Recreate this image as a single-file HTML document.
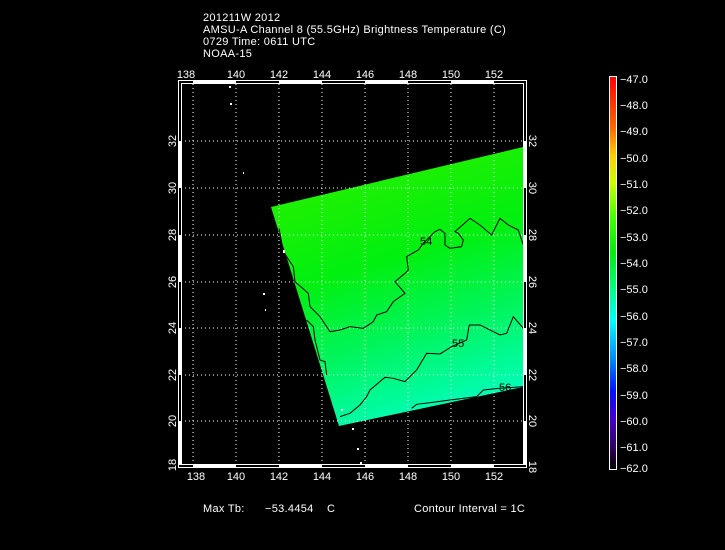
<!DOCTYPE html>
<html><head><style>
html,body{margin:0;padding:0;background:#000;width:725px;height:550px;overflow:hidden}
svg{display:block}
text{font-family:"Liberation Sans",sans-serif;fill:#fff;font-size:11px}
</style></head><body>
<svg width="725" height="550" viewBox="0 0 725 550">
<defs>
<linearGradient id="g" gradientUnits="userSpaceOnUse" x1="390" y1="160" x2="470" y2="420">
<stop offset="0" stop-color="#22f000"/>
<stop offset="0.35" stop-color="#00f010"/>
<stop offset="0.65" stop-color="#00f560"/>
<stop offset="1" stop-color="#00ffc8"/>
</linearGradient>
<linearGradient id="cb" x1="0" y1="0" x2="0" y2="1">
<stop offset="0" stop-color="#ff0000"/>
<stop offset="0.13" stop-color="#ff6600"/>
<stop offset="0.2" stop-color="#ffcc00"/>
<stop offset="0.27" stop-color="#ccff00"/>
<stop offset="0.36" stop-color="#44ff00"/>
<stop offset="0.45" stop-color="#00ee10"/>
<stop offset="0.55" stop-color="#00ff90"/>
<stop offset="0.62" stop-color="#00ffff"/>
<stop offset="0.72" stop-color="#0088ff"/>
<stop offset="0.8" stop-color="#0011ff"/>
<stop offset="0.87" stop-color="#4400cc"/>
<stop offset="0.94" stop-color="#330066"/>
<stop offset="1" stop-color="#000000"/>
</linearGradient>
</defs>
<g style="letter-spacing:0.3px">
<text x="203" y="21">201211W 2012</text>
<text x="203" y="33">AMSU-A Channel 8 (55.5GHz) Brightness Temperature (C)</text>
<text x="203" y="45">0729 Time: 0611 UTC</text>
<text x="203" y="57">NOAA-15</text>
</g>

<polygon points="271,207 523,147 523,387 339,426" fill="url(#g)"/>

<g stroke="#fff" stroke-width="1" stroke-dasharray="1,3" fill="none">
<line x1="193" y1="84" x2="193" y2="465"/><line x1="236" y1="84" x2="236" y2="465"/>
<line x1="279" y1="84" x2="279" y2="465"/><line x1="322" y1="84" x2="322" y2="465"/>
<line x1="365" y1="84" x2="365" y2="465"/><line x1="408" y1="84" x2="408" y2="465"/>
<line x1="451" y1="84" x2="451" y2="465"/><line x1="494" y1="84" x2="494" y2="465"/>
<line x1="181" y1="141" x2="524" y2="141"/><line x1="181" y1="188" x2="524" y2="188"/>
<line x1="181" y1="235" x2="524" y2="235"/><line x1="181" y1="282" x2="524" y2="282"/>
<line x1="181" y1="328" x2="524" y2="328"/><line x1="181" y1="375" x2="524" y2="375"/>
<line x1="181" y1="421" x2="524" y2="421"/>
</g>

<g transform="translate(260,140) scale(0.3333)" stroke="#000" stroke-width="3" fill="none">
<polyline points="57,265 70,335 100,380 105,425 145,460 150,500 180,530 210,575 240,570 270,560 310,565 340,545 350,525 380,515 400,485 435,460 405,425 435,400 445,390 440,350 475,330 490,310 525,275 540,268 555,280 555,315 570,325 605,320 610,300 595,280 585,275 630,235 660,255 695,285 720,235 745,255 775,270 790,315"/>
<polyline points="140,540 160,560 165,600 180,660 195,665 200,705"/>
<polyline points="240,830 270,820 300,795 320,770 330,750 375,712 400,715 435,725 470,690 500,640 540,642 575,620 620,600 628,555 660,555 690,570 720,585 740,580 760,530 790,565"/>
<polyline points="455,805 470,793 520,787 570,780 650,770 670,750 720,745 790,740"/>
</g>
<text x="420" y="245" font-size="10" style="fill:#000">54</text>
<text x="452" y="347" font-size="10" style="fill:#000">55</text>
<text x="499" y="391" font-size="10" style="fill:#000">56</text>

<g fill="#fff">
<rect x="229" y="86" width="2" height="2"/><rect x="230" y="103" width="2" height="2"/>
<rect x="243" y="172" width="1" height="2"/><rect x="283" y="250" width="2" height="3"/>
<rect x="263" y="293" width="2" height="2"/><rect x="265" y="309" width="1" height="2"/>
<rect x="341" y="409" width="2" height="2"/><rect x="352" y="428" width="2" height="2"/>
<rect x="357" y="448" width="2" height="2"/><rect x="360" y="462" width="2" height="2"/>
</g>

<rect x="178.5" y="80.5" width="348" height="387" fill="none" stroke="#fff" stroke-width="1"/>
<rect x="181.5" y="83.5" width="342" height="381" fill="none" stroke="#fff" stroke-width="1"/>
<g fill="#fff">
<rect x="193" y="81" width="43" height="2"/><rect x="279" y="81" width="43" height="2"/>
<rect x="365" y="81" width="43" height="2"/><rect x="451" y="81" width="43" height="2"/>
<rect x="193" y="465" width="43" height="2"/><rect x="279" y="465" width="43" height="2"/>
<rect x="365" y="465" width="43" height="2"/><rect x="451" y="465" width="43" height="2"/>
<rect x="179" y="141" width="2" height="47"/><rect x="179" y="235" width="2" height="47"/>
<rect x="179" y="328" width="2" height="47"/><rect x="179" y="421" width="2" height="44"/>
<rect x="524" y="141" width="2" height="47"/><rect x="524" y="235" width="2" height="47"/>
<rect x="524" y="328" width="2" height="47"/><rect x="524" y="421" width="2" height="44"/>
</g>

<g text-anchor="middle">
<text x="186" y="78">138</text><text x="236" y="78">140</text><text x="279" y="78">142</text>
<text x="322" y="78">144</text><text x="365" y="78">146</text><text x="408" y="78">148</text>
<text x="451" y="78">150</text><text x="494" y="78">152</text>
<text x="196" y="480">138</text><text x="236" y="480">140</text><text x="279" y="480">142</text>
<text x="322" y="480">144</text><text x="365" y="480">146</text><text x="408" y="480">148</text>
<text x="451" y="480">150</text><text x="494" y="480">152</text>
</g>
<g text-anchor="middle">
<text transform="translate(176,141) rotate(-90)">32</text>
<text transform="translate(176,188) rotate(-90)">30</text>
<text transform="translate(176,235) rotate(-90)">28</text>
<text transform="translate(176,282) rotate(-90)">26</text>
<text transform="translate(176,328) rotate(-90)">24</text>
<text transform="translate(176,375) rotate(-90)">22</text>
<text transform="translate(176,421) rotate(-90)">20</text>
<text transform="translate(176,465) rotate(-90)">18</text>
<text transform="translate(529,141) rotate(90)">32</text>
<text transform="translate(529,188) rotate(90)">30</text>
<text transform="translate(529,235) rotate(90)">28</text>
<text transform="translate(529,282) rotate(90)">26</text>
<text transform="translate(529,328) rotate(90)">24</text>
<text transform="translate(529,375) rotate(90)">22</text>
<text transform="translate(529,421) rotate(90)">20</text>
<text transform="translate(529,467) rotate(90)">18</text>
</g>

<rect x="609.5" y="76.5" width="7" height="393" fill="url(#cb)" stroke="#fff" stroke-width="1"/>
<g>
<text x="620" y="83">−47.0</text><text x="620" y="109">−48.0</text><text x="620" y="135">−49.0</text>
<text x="620" y="162">−50.0</text><text x="620" y="188">−51.0</text><text x="620" y="214">−52.0</text>
<text x="620" y="241">−53.0</text><text x="620" y="267">−54.0</text><text x="620" y="293">−55.0</text>
<text x="620" y="320">−56.0</text><text x="620" y="346">−57.0</text><text x="620" y="372">−58.0</text>
<text x="620" y="399">−59.0</text><text x="620" y="425">−60.0</text><text x="620" y="451">−61.0</text>
<text x="620" y="472">−62.0</text>
</g>

<g style="letter-spacing:0.3px">
<text x="203" y="512">Max Tb:</text>
<text x="265" y="512">−53.4454</text>
<text x="327" y="512">C</text>
<text x="414" y="512">Contour Interval = 1C</text>
</g>
</svg>
</body></html>
